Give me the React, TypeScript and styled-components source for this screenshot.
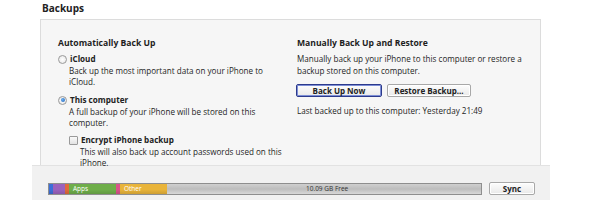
import React from 'react'
import styled, { createGlobalStyle } from 'styled-components'

const Global = createGlobalStyle`
  body {
    margin: 0;
    background: #fff;
    font-family: "Open Sans", "Noto Sans", sans-serif;
    color: #1e1e1e;
  }
`

const Page = styled.div`
  width: 600px;
  height: 200px;
  overflow: hidden;
  padding-top: 2px;
  box-sizing: border-box;
`

const Title = styled.h2`
  margin: 0 0 4px 42px;
  font-size: 10px;
  font-weight: 700;
  line-height: 13px;
  color: #222;
`

const Panel = styled.div`
  margin-left: 40px;
  width: 501px;
  height: 146px;
  box-sizing: border-box;
  border: 1px solid #dcdcdc;
  border-bottom: 0;
  background: #f6f6f6;
  display: grid;
  grid-template-columns: 239px 1fr;
  padding: 17px 0 0 17px;
  font-size: 8.1px;
  line-height: 11px;
`

const Column = styled.div`
  display: flex;
  flex-direction: column;
`

const Heading = styled.div`
  font-weight: 700;
  font-size: 8.6px;
  line-height: 12px;
  margin-bottom: 4px;
`

const Option = styled.label<{ $indent?: number }>`
  display: flex;
  align-items: center;
  gap: 3px;
  font-weight: 700;
  margin-left: ${p => p.$indent ?? 0}px;
  line-height: 12px;
`

const Desc = styled.div<{ $indent: number; $after?: number }>`
  margin-left: ${p => p.$indent}px;
  margin-bottom: ${p => p.$after ?? 0}px;
`

const Radio = styled.span<{ $on?: boolean }>`
  width: 7px;
  height: 7px;
  border-radius: 50%;
  border: 1px solid #9a9a9a;
  background: radial-gradient(circle, #fff 0%, #e4e4e4 100%);
  display: inline-flex;
  align-items: center;
  justify-content: center;
  &::after {
    content: '';
    width: 4px;
    height: 4px;
    border-radius: 50%;
    background: ${p => (p.$on ? 'radial-gradient(circle at 40% 40%, #6ab0f0, #1d5fb8)' : 'transparent')};
  }
`

const Check = styled.span`
  width: 7px;
  height: 7px;
  border: 1px solid #9a9a9a;
  border-radius: 1px;
  background: linear-gradient(#fafafa, #e2e2e2);
`

const Text = styled.span`
  color: #222;
`

const RightDesc = styled.div`
  line-height: 12px;
`

const Buttons = styled.div`
  display: flex;
  gap: 5px;
  margin: 7px 0 8px -1px;
`

const Button = styled.button<{ $default?: boolean; $w: number }>`
  width: ${p => p.$w}px;
  height: 13px;
  padding: 0;
  font-family: inherit;
  font-size: 8px;
  font-weight: 700;
  line-height: 11px;
  color: #222;
  border-radius: 2px;
  border: 1px solid ${p => (p.$default ? '#2c3a8c' : '#a8a8a8')};
  box-shadow: ${p => (p.$default ? 'inset 0 0 0 1px #7d8ed6' : 'inset 0 0 0 1px #fff')};
  background: linear-gradient(#fdfdfd, #e9e9e9);
`

const Footer = styled.div`
  margin-left: 32px;
  width: 518px;
  height: 35px;
  background: #f1f1f1;
  border-top: 1px solid #e2e2e2;
  display: flex;
  align-items: flex-start;
  gap: 7px;
  padding: 16px 0 0 16px;
  box-sizing: border-box;
`

const Bar = styled.div`
  width: 434px;
  height: 12px;
  margin-top: 1px;
  display: flex;
  border: 1px solid #8e8e8e;
  box-sizing: border-box;
  overflow: hidden;
  font-size: 6.5px;
  line-height: 10px;
  color: #fff;
`

const Segment = styled.div<{ $w: number; $color: string }>`
  flex: 0 0 ${p => p.$w}px;
  background: linear-gradient(${p => p.$color}, ${p => p.$color} 55%, rgba(0, 0, 0, 0.12));
  background-color: ${p => p.$color};
  padding-left: 4px;
  box-sizing: border-box;
  white-space: nowrap;
`

const Free = styled.div`
  flex: 1;
  background: linear-gradient(#cfcfcf, #bdbdbd 50%, #d8d8d8);
  color: #333;
  padding-left: 139px;
  white-space: nowrap;
`

const segments = [
  { w: 2, color: '#3d6fd8' },
  { w: 12, color: '#9b62bd' },
  { w: 2, color: '#e06a3a' },
  { w: 47, color: '#6fae4a', label: 'Apps' },
  { w: 2, color: '#d9548b' },
  { w: 47, color: '#e9b43a', label: 'Other' },
]

export default function App() {
  return (
    <Page>
      <Global />
      <Title>Backups</Title>
      <Panel>
        <Column>
          <Heading>Automatically Back Up</Heading>
          <Option>
            <Radio />
            <Text>iCloud</Text>
          </Option>
          <Desc $indent={11} $after={7}>
            Back up the most important data on your iPhone to
            <br />
            iCloud.
          </Desc>
          <Option>
            <Radio $on />
            <Text>This computer</Text>
          </Option>
          <Desc $indent={11} $after={6}>
            A full backup of your iPhone will be stored on this
            <br />
            computer.
          </Desc>
          <Option $indent={11}>
            <Check />
            <Text>Encrypt iPhone backup</Text>
          </Option>
          <Desc $indent={22}>
            This will also back up account passwords used on this
            <br />
            iPhone.
          </Desc>
        </Column>
        <Column>
          <Heading>Manually Back Up and Restore</Heading>
          <RightDesc>
            Manually back up your iPhone to this computer or restore a
            <br />
            backup stored on this computer.
          </RightDesc>
          <Buttons>
            <Button $default $w={86}>Back Up Now</Button>
            <Button $w={84}>Restore Backup...</Button>
          </Buttons>
          <div>Last backed up to this computer: Yesterday 21:49</div>
        </Column>
      </Panel>
      <Footer>
        <Bar>
          {segments.map((s, i) => (
            <Segment key={i} $w={s.w} $color={s.color}>
              {s.label}
            </Segment>
          ))}
          <Free>10.09 GB Free</Free>
        </Bar>
        <Button $w={46}>Sync</Button>
      </Footer>
    </Page>
  )
}
